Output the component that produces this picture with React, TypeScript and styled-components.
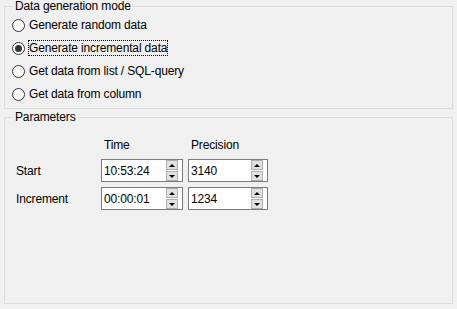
import styled, { createGlobalStyle } from 'styled-components';

const GlobalStyle = createGlobalStyle`
  html, body {
    margin: 0;
    padding: 0;
    background: #f0f0f0;
  }
  body {
    font-family: 'Liberation Sans', Arial, sans-serif;
    font-size: 12px;
    letter-spacing: -0.15px;
    color: #000;
  }
`;

const Page = styled.div`
  display: flex;
  flex-direction: column;
  gap: 2px;
  width: 457px;
  height: 309px;
  padding-bottom: 5px;
  box-sizing: border-box;
`;

const Group = styled.fieldset<{ $grow?: boolean }>`
  margin: 0 4px;
  padding: 0;
  min-width: 0;
  border: 1px solid #dcdcdc;
  flex: ${({ $grow }) => ($grow ? 1 : 'none')};

  legend {
    margin-left: 8px;
    padding: 0 2px;
    line-height: 12px;
    height: 12px;
  }
`;

const RadioList = styled.div`
  display: flex;
  flex-direction: column;
  padding: 2px 0 2px 7px;
`;

const RadioRow = styled.label`
  display: flex;
  align-items: center;
  gap: 3px;
  height: 23px;
`;

const RadioCircle = styled.span<{ $checked?: boolean }>`
  position: relative;
  width: 13px;
  height: 13px;
  box-sizing: border-box;
  border: 1px solid #333;
  border-radius: 50%;
  background: #fff;

  &::after {
    content: '';
    display: ${({ $checked }) => ($checked ? 'block' : 'none')};
    position: absolute;
    left: 2px;
    top: 2px;
    width: 7px;
    height: 7px;
    border-radius: 50%;
    background: #333;
  }
`;

const RadioText = styled.span<{ $focused?: boolean }>`
  padding: 1px;
  margin-top: -2px;
  outline: ${({ $focused }) => ($focused ? '1px dotted #000' : 'none')};
  outline-offset: -1px;
`;

const ParamGrid = styled.div`
  display: grid;
  grid-template-columns: 80px 82px 80px;
  grid-template-rows: 18px 23px 23px;
  column-gap: 5px;
  row-gap: 5px;
  padding: 13px 0 0 11px;
  align-items: center;
`;

const Header = styled.span`
  padding-left: 3px;
`;

const SpinBox = styled.div`
  display: flex;
  align-items: stretch;
  height: 23px;
  box-sizing: border-box;
  border: 1px solid #7a7a7a;
  background: #fff;
`;

const SpinValue = styled.span`
  flex: 1;
  display: flex;
  align-items: center;
  padding-left: 2px;
`;

const SpinButtons = styled.div`
  display: flex;
  flex-direction: column;
  gap: 1px;
  margin-right: 4px;
`;

const SpinButton = styled.div<{ $down?: boolean }>`
  display: flex;
  align-items: center;
  justify-content: center;
  width: 12px;
  height: 10px;
  box-sizing: border-box;
  border: 1px solid #adadad;
  background: #e1e1e1;

  &::before {
    content: '';
    width: 0;
    height: 0;
    border-left: 3px solid transparent;
    border-right: 3px solid transparent;
    ${({ $down }) =>
      $down ? 'border-top: 3px solid #000;' : 'border-bottom: 3px solid #000;'}
  }
`;

const modes = [
  'Generate random data',
  'Generate incremental data',
  'Get data from list / SQL-query',
  'Get data from column',
];

const Spin = ({ value }: { value: string }) => (
  <SpinBox>
    <SpinValue>{value}</SpinValue>
    <SpinButtons>
      <SpinButton />
      <SpinButton $down />
    </SpinButtons>
  </SpinBox>
);

const App = () => {
  const selected = 1;

  return (
    <Page>
      <GlobalStyle />
      <Group>
        <legend>Data generation mode</legend>
        <RadioList>
          {modes.map((m, i) => (
            <RadioRow key={m}>
              <RadioCircle $checked={i === selected} />
              <RadioText $focused={i === selected}>{m}</RadioText>
            </RadioRow>
          ))}
        </RadioList>
      </Group>
      <Group $grow>
        <legend>Parameters</legend>
        <ParamGrid>
          <span />
          <Header>Time</Header>
          <Header>Precision</Header>
          <span>Start</span>
          <Spin value='10:53:24' />
          <Spin value='3140' />
          <span>Increment</span>
          <Spin value='00:00:01' />
          <Spin value='1234' />
        </ParamGrid>
      </Group>
    </Page>
  );
};

export default App;
